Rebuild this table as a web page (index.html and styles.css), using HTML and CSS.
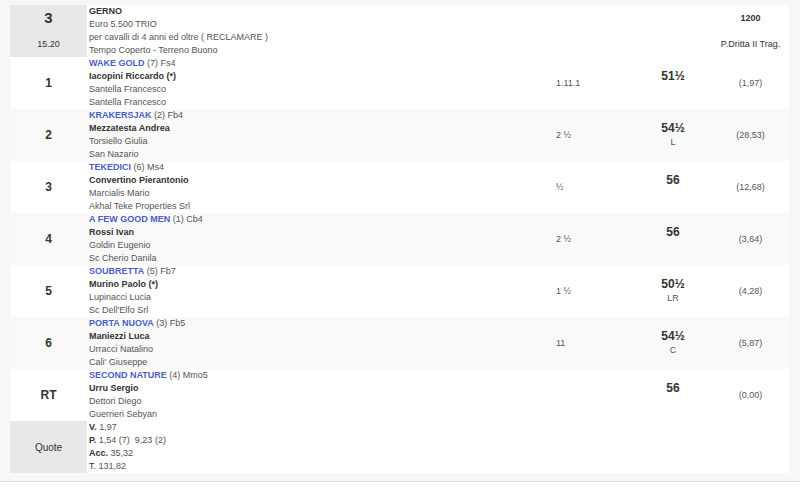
FILE: index.html
```html
<!DOCTYPE html>
<html>
<head>
<meta charset="utf-8">
<link rel="stylesheet" href="styles.css">
</head>
<body>
<div class="wrap">
<table class="race">
<colgroup>
<col class="c-num"><col class="c-info"><col class="c-dist"><col class="c-wt"><col class="c-odds">
</colgroup>
<tr class="head">
  <td class="num gray"><div class="hl big">3</div><div class="hl">15.20</div></td>
  <td class="info"><b class="dark">GERNO</b><br>Euro 5.500 TRIO<br>per cavalli di 4 anni ed oltre ( RECLAMARE )<br>Tempo Coperto - Terreno Buono</td>
  <td></td>
  <td></td>
  <td class="odds"><div class="hl"><b class="dark">1200</b></div><div class="hl dark">P.Dritta II Trag.</div></td>
</tr>
<tr>
  <td class="num pos">1</td>
  <td class="info"><a class="horse">WAKE GOLD</a> (7) Fs4<br><b class="dark">Iacopini Riccardo (*)</b><br>Santella Francesco<br>Santella Francesco</td>
  <td class="dist">1.11.1</td>
  <td class="wt"><span class="kg">51½</span><br>&nbsp;</td>
  <td class="odds">(1,97)</td>
</tr>
<tr class="alt">
  <td class="num pos">2</td>
  <td class="info"><a class="horse">KRAKERSJAK</a> (2) Fb4<br><b class="dark">Mezzatesta Andrea</b><br>Torsiello Giulia<br>San Nazario</td>
  <td class="dist">2 ½</td>
  <td class="wt"><span class="kg">54½</span><br>L</td>
  <td class="odds">(28,53)</td>
</tr>
<tr>
  <td class="num pos">3</td>
  <td class="info"><a class="horse">TEKEDICI</a> (6) Ms4<br><b class="dark">Convertino Pierantonio</b><br>Marcialis Mario<br>Akhal Teke Properties Srl</td>
  <td class="dist">½</td>
  <td class="wt"><span class="kg">56</span><br>&nbsp;</td>
  <td class="odds">(12,68)</td>
</tr>
<tr class="alt">
  <td class="num pos">4</td>
  <td class="info"><a class="horse">A FEW GOOD MEN</a> (1) Cb4<br><b class="dark">Rossi Ivan</b><br>Goldin Eugenio<br>Sc Cherio Danila</td>
  <td class="dist">2 ½</td>
  <td class="wt"><span class="kg">56</span><br>&nbsp;</td>
  <td class="odds">(3,64)</td>
</tr>
<tr>
  <td class="num pos">5</td>
  <td class="info"><a class="horse">SOUBRETTA</a> (5) Fb7<br><b class="dark">Murino Paolo (*)</b><br>Lupinacci Lucia<br>Sc Dell'Elfo Srl</td>
  <td class="dist">1 ½</td>
  <td class="wt"><span class="kg">50½</span><br>LR</td>
  <td class="odds">(4,28)</td>
</tr>
<tr class="alt">
  <td class="num pos">6</td>
  <td class="info"><a class="horse">PORTA NUOVA</a> (3) Fb5<br><b class="dark">Maniezzi Luca</b><br>Urracci Natalino<br>Cali' Giuseppe</td>
  <td class="dist">11</td>
  <td class="wt"><span class="kg">54½</span><br>C</td>
  <td class="odds">(5,87)</td>
</tr>
<tr>
  <td class="num pos">RT</td>
  <td class="info"><a class="horse">SECOND NATURE</a> (4) Mmo5<br><b class="dark">Urru Sergio</b><br>Dettori Diego<br>Guerrieri Sebyan</td>
  <td class="dist"></td>
  <td class="wt"><span class="kg">56</span><br>&nbsp;</td>
  <td class="odds">(0,00)</td>
</tr>
<tr>
  <td class="num gray quote">Quote</td>
  <td class="info"><b class="dark">V.</b> 1,97<br><b class="dark">P.</b> 1,54 (7)&nbsp; 9,23 (2)<br><b class="dark">Acc.</b> 35,32<br><span class="dark">T.</span> 131,82</td>
  <td></td>
  <td></td>
  <td></td>
</tr>
</table>
</div>
</body>
</html>
```

FILE: styles.css
```css
html, body {
  margin: 0;
  padding: 0;
  background: #ffffff;
}
body {
  font-family: "Liberation Sans", Arial, sans-serif;
  font-size: 9px;
  color: #555;
}
.wrap {
  background: #f7f7f7;
  padding: 5px 11px 8px 10px;
  border-bottom: 1px solid #dedede;
}
.race {
  border-collapse: collapse;
  table-layout: fixed;
  width: 779px;
  background: #fff;
}
.c-num { width: 77px; }
.c-info { width: 443px; }
.c-dist { width: 104px; }
.c-wt { width: 78px; }
.c-odds { width: 77px; }
.race td {
  padding: 0;
  line-height: 13px;
  height: 52px;
  vertical-align: middle;
}
.race tr.alt td {
  background: #f9f9f9;
}
.race td.gray {
  background: #e8e8e8;
}
.info {
  padding-left: 2px !important;
  vertical-align: top !important;
}
.num {
  text-align: center;
  color: #333;
}
.pos {
  font-size: 12px;
  font-weight: bold;
}
.quote {
  font-size: 10px;
  color: #333;
}
.hl {
  height: 26px;
  line-height: 26px;
}
.big {
  font-size: 15px;
  font-weight: bold;
  color: #333;
}
.dark {
  color: #333;
}
b.dark {
  font-weight: bold;
}
.horse {
  color: #4a5ec4;
  font-weight: bold;
  text-decoration: none;
}
.dist {
  padding-left: 26px !important;
  color: #555;
}
.wt {
  text-align: center;
}
.kg {
  font-size: 12px;
  font-weight: bold;
  color: #333;
}
.odds {
  text-align: center;
}
```
